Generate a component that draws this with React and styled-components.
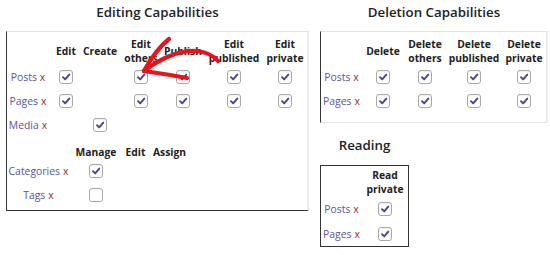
import React from "react";
import styled, { createGlobalStyle } from "styled-components";

const Global = createGlobalStyle`
  html, body { margin: 0; padding: 0; background: #fff; }
  body { font-family: "Open Sans", "Noto Sans", sans-serif; color: #222; }
`;

const Page = styled.div`
  position: relative;
  width: 550px;
  height: 255px;
  display: flex;
  align-items: flex-start;
  gap: 11px;
  padding: 2px 0 0 6px;
  box-sizing: border-box;
`;

const Column = styled.div`
  display: flex;
  flex-direction: column;
  align-items: ${(p) => p.$align || "stretch"};
  width: ${(p) => p.$width}px;
`;

const Title = styled.h2`
  margin: ${(p) => p.$mt || 0}px 0 ${(p) => p.$mb || 9}px;
  font-size: 13.3px;
  line-height: 20px;
  font-weight: 600;
  text-align: center;
  color: #222;
  align-self: ${(p) => p.$self || "stretch"};
  width: ${(p) => (p.$w ? `${p.$w}px` : "auto")};
`;

const Panel = styled.div`
  border-style: solid;
  border-width: 1px 2px 1px 1px;
  border-color: #e4e4e4 #ececec ${(p) => (p.$darkBottom ? "#333" : "#e4e4e4")} #333;
  padding: 4px 0 ${(p) => p.$pb}px 0;
`;

const BoxPanel = styled.div`
  border: 1px solid #333;
  width: ${(p) => p.$w}px;
  padding: 2px 0 0 0;
`;

const Grid = styled.div`
  display: grid;
  grid-template-columns: ${(p) => p.$cols};
  grid-auto-rows: ${(p) => p.$row}px;
  margin-top: ${(p) => p.$mt || 0}px;
`;

const HeadCell = styled.div`
  grid-row: 1;
  height: ${(p) => p.$h}px;
  display: flex;
  align-items: center;
  justify-content: center;
  text-align: center;
  font-size: 10.3px;
  line-height: 14px;
  font-weight: 700;
  color: #222;
  white-space: pre-line;
  align-self: start;
`;

const Label = styled.div`
  display: flex;
  align-items: center;
  justify-content: center;
  font-size: 10.4px;
  color: #5c5398;
  white-space: nowrap;
`;

const Remove = styled.span`
  color: #9a1f1f;
  margin-left: 3px;
`;

const Cell = styled.div`
  display: flex;
  align-items: center;
  justify-content: center;
`;

const Box = styled.span`
  width: 12px;
  height: 12px;
  border: 1px solid #a8a8a8;
  border-radius: 3px;
  background: #fff;
  display: inline-flex;
  align-items: center;
  justify-content: center;
  box-shadow: inset 0 1px 1px rgba(0, 0, 0, 0.06);
`;

const Overlay = styled.svg`
  position: absolute;
  left: 0;
  top: 0;
  pointer-events: none;
`;

function Check({ on }) {
  return (
    <Box>
      {on && (
        <svg width="10" height="10" viewBox="0 0 10 10">
          <path
            d="M2 5.2 L4.2 7.4 L8.3 2.6"
            fill="none"
            stroke="#4f418f"
            strokeWidth="1.9"
            strokeLinecap="round"
            strokeLinejoin="round"
          />
        </svg>
      )}
    </Box>
  );
}

function Table({ cols, headers, rows, headH, rowH, mt }) {
  return (
    <Grid $cols={cols} $row={rowH} $mt={mt} style={{ gridTemplateRows: `${headH}px` }}>
      <HeadCell $h={headH} />
      {headers.map((h, i) => (
        <HeadCell key={i} $h={headH}>
          {h}
        </HeadCell>
      ))}
      {rows.map((r) => (
        <React.Fragment key={r.name}>
          <Label>
            {r.name}
            <Remove>x</Remove>
          </Label>
          {r.cells.map((c, i) => (
            <Cell key={i}>{c === null ? null : <Check on={c} />}</Cell>
          ))}
        </React.Fragment>
      ))}
    </Grid>
  );
}

export default function App() {
  return (
    <>
      <Global />
      <Page>
        <Column $width={303}>
          <Title>Editing Capabilities</Title>
          <Panel $darkBottom $pb={3}>
            <Table
              cols="42px 34px 34px 48px 36px 66px 36px"
              headH={29}
              rowH={24}
              headers={["Edit", "Create", "Edit\nothers", "Publish", "Edit\npublished", "Edit\nprivate"]}
              rows={[
                { name: "Posts", cells: [true, null, true, true, true, true] },
                { name: "Pages", cells: [true, null, true, true, true, true] },
                { name: "Media", cells: [null, true, null, null, null, null] },
              ]}
            />
            <Table
              cols="63px 52px 27px 41px"
              headH={14}
              rowH={24}
              mt={8}
              headers={["Manage", "Edit", "Assign"]}
              rows={[
                { name: "Categories", cells: [true, null, null] },
                { name: "Tags", cells: [false, null, null] },
              ]}
            />
          </Panel>
        </Column>
        <Column $width={228} $align="flex-start">
          <Title $self="stretch">Deletion Capabilities</Title>
          <Panel $pb={9} style={{ alignSelf: "stretch" }}>
            <Table
              cols="41px 42px 42px 56px 44px"
              headH={29}
              rowH={24}
              headers={["Delete", "Delete\nothers", "Delete\npublished", "Delete\nprivate"]}
              rows={[
                { name: "Posts", cells: [true, true, true, true] },
                { name: "Pages", cells: [true, true, true, true] },
              ]}
            />
          </Panel>
          <Title $self="flex-start" $w={89} $mt={12} $mb={10}>
            Reading
          </Title>
          <BoxPanel $w={87}>
            <Table
              cols="41px 46px"
              headH={28}
              rowH={25}
              headers={["Read\nprivate"]}
              rows={[
                { name: "Posts", cells: [true] },
                { name: "Pages", cells: [true] },
              ]}
            />
          </BoxPanel>
        </Column>
        <Overlay width="550" height="255" viewBox="0 0 550 255">
          <g fill="none" stroke="#e8131b" strokeWidth="4.2" strokeLinecap="round" strokeLinejoin="round">
            <path d="M144 71 C 158 60, 178 50, 196 51 C 206 52, 214 56, 218 61" />
            <path d="M144 71 C 150 60, 159 47, 169 39" />
            <path d="M144 71 C 158 73, 172 75, 187 78" />
          </g>
        </Overlay>
      </Page>
    </>
  );
}
